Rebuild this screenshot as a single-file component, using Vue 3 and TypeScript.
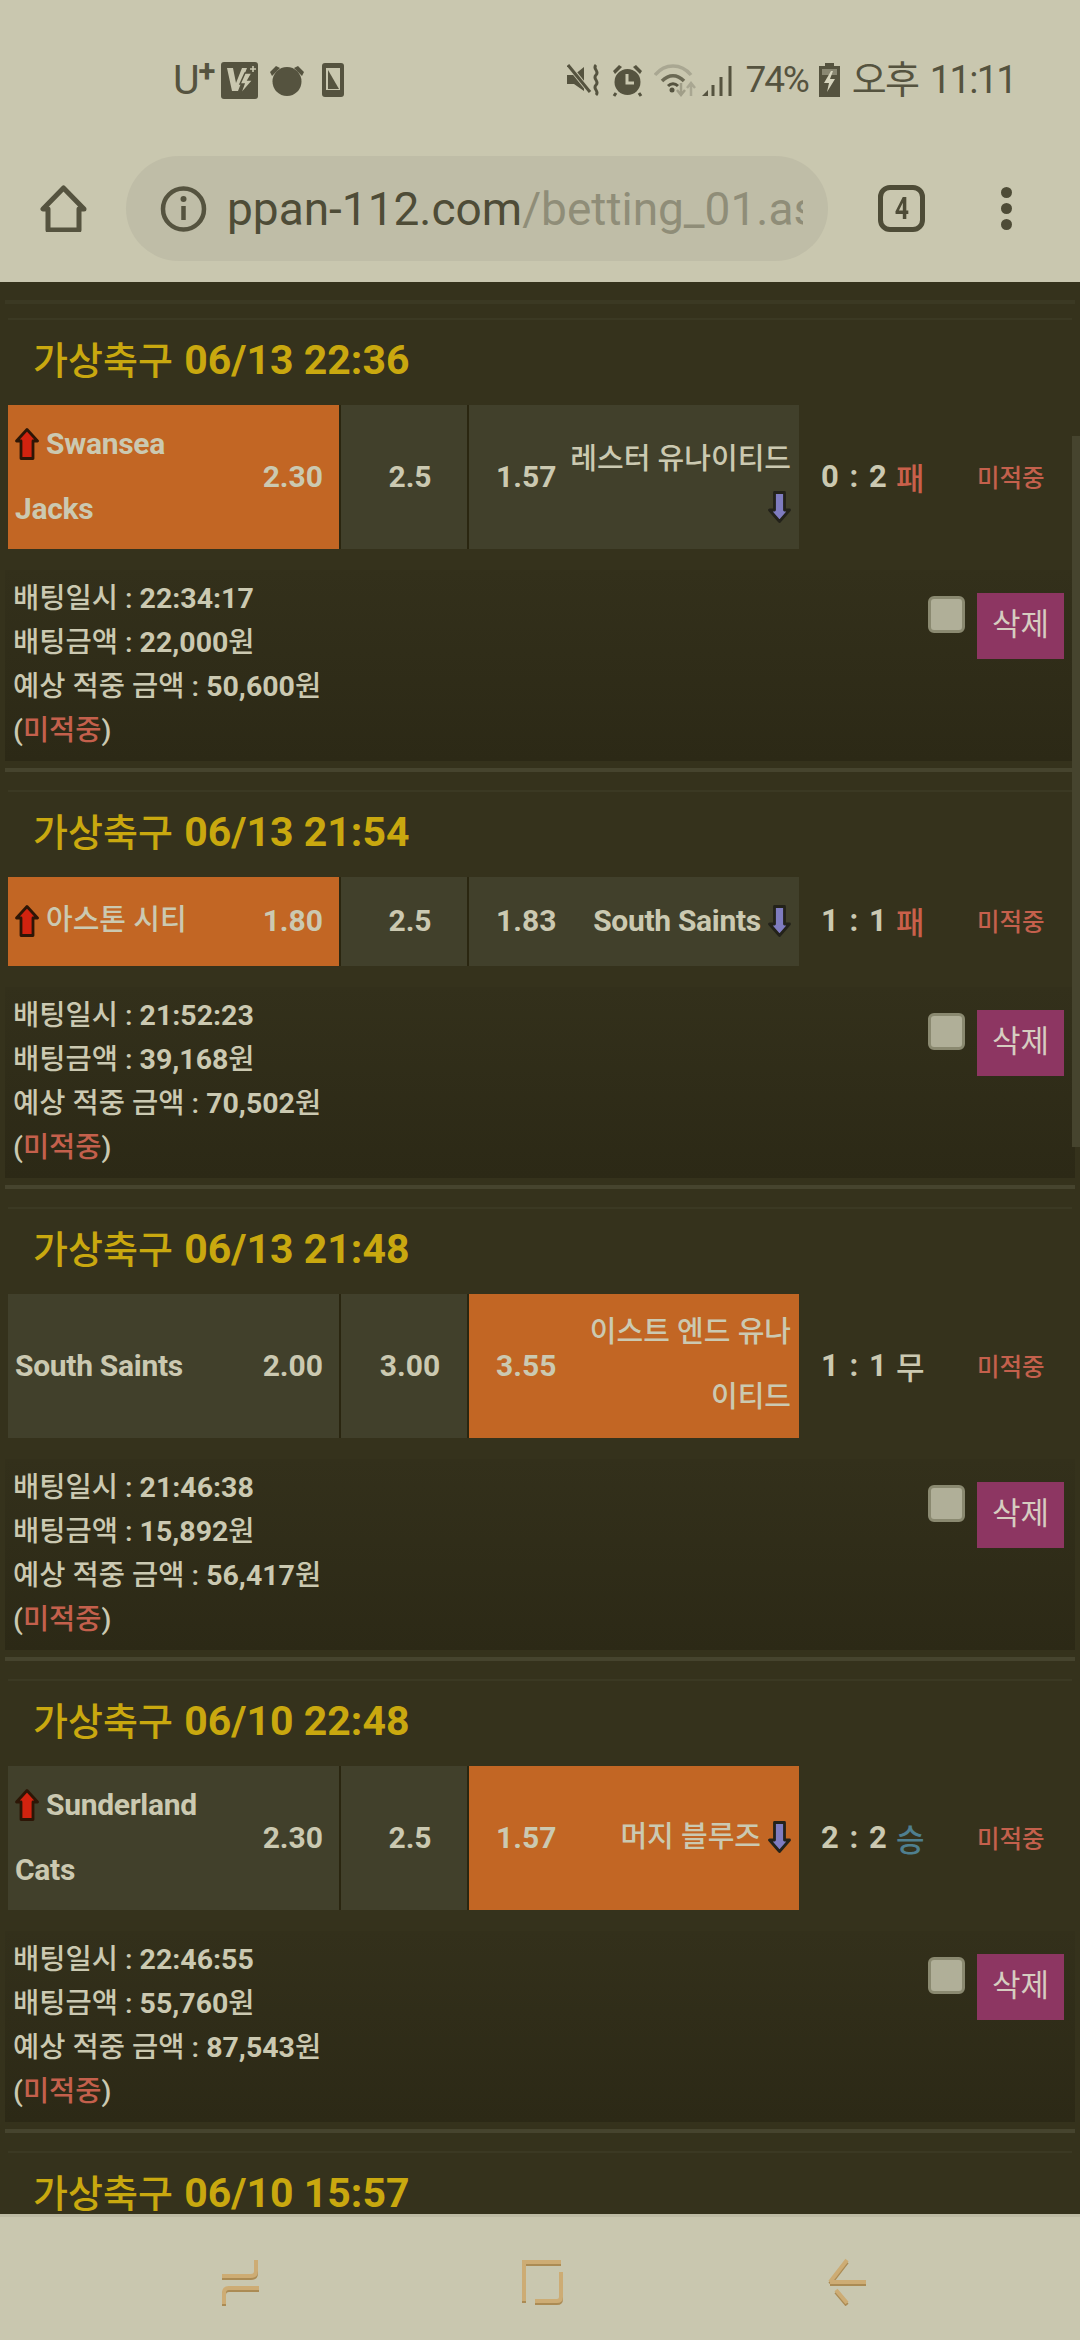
<script setup lang="ts">
// Betting history list under a mobile browser chrome. Everything is static data.
interface Line {
  text?: string;
  arrow?: "up" | "down";
}
interface Slip {
  date: string;
  home: Line[];
  homeOdds: string;
  mid: string;
  awayOdds: string;
  away: Line[];
  tight?: boolean;
  score: string;
  result: string;
  resultClass: string;
  picked: "home" | "away";
  time: string;
  stake: string;
  payout: string;
}

const slips: Slip[] = [
  {
    date: "06/13 22:36",
    home: [{ text: "Swansea", arrow: "up" }, { text: "Jacks" }],
    homeOdds: "2.30",
    mid: "2.5",
    awayOdds: "1.57",
    away: [{ text: "레스터 유나이티드" }, { arrow: "down" }],
    tight: true,
    score: "0 : 2",
    result: "패",
    resultClass: "lose",
    picked: "home",
    time: "22:34:17",
    stake: "22,000",
    payout: "50,600",
  },
  {
    date: "06/13 21:54",
    home: [{ text: "아스톤 시티", arrow: "up" }],
    homeOdds: "1.80",
    mid: "2.5",
    awayOdds: "1.83",
    away: [{ text: "South Saints", arrow: "down" }],
    score: "1 : 1",
    result: "패",
    resultClass: "lose",
    picked: "home",
    time: "21:52:23",
    stake: "39,168",
    payout: "70,502",
  },
  {
    date: "06/13 21:48",
    home: [{ text: "South Saints" }],
    homeOdds: "2.00",
    mid: "3.00",
    awayOdds: "3.55",
    away: [{ text: "이스트 엔드 유나" }, { text: "이티드" }],
    score: "1 : 1",
    result: "무",
    resultClass: "draw",
    picked: "away",
    time: "21:46:38",
    stake: "15,892",
    payout: "56,417",
  },
  {
    date: "06/10 22:48",
    home: [{ text: "Sunderland", arrow: "up" }, { text: "Cats" }],
    homeOdds: "2.30",
    mid: "2.5",
    awayOdds: "1.57",
    away: [{ text: "머지 블루즈", arrow: "down" }],
    score: "2 : 2",
    result: "승",
    resultClass: "win",
    picked: "away",
    time: "22:46:55",
    stake: "55,760",
    payout: "87,543",
  },
];

const isHangul = (s?: string) => !!s && /[가-힣]/.test(s);
</script>

<template>
  <div class="phone">
    <header class="chrome">
      <div class="status">
        <div class="status-left">
          <span class="carrier">U<sup>+</sup></span>
          <svg width="37" height="37" viewBox="0 0 37 37">
            <rect width="37" height="37" rx="3" fill="#55533f" />
            <path d="M6 6h6l3 15 6-15h5l-9 23h-6z" fill="#c9c7af" />
            <path d="M24 11l7 0-4 7 5 0-13 15 4-11-4 0z" fill="#c9c7af" stroke="#55533f" stroke-width="1.5" />
            <path d="M29 7h6M32 4v6" stroke="#c9c7af" stroke-width="1.6" />
          </svg>
          <svg class="bell" width="36" height="32" viewBox="0 0 36 32">
            <circle cx="18" cy="17.5" r="14.5" fill="#55533f" />
            <path d="M1 8l6-6 4 2-8 8zM35 8l-6-6-4 2 8 8z" fill="#55533f" />
          </svg>
          <svg class="handset" width="22" height="34" viewBox="0 0 22 34">
            <rect width="22" height="34" rx="3" fill="#55533f" />
            <path d="M4 5h14v22H4z" fill="#c9c7af" />
            <path d="M6 7l11 19H6z" fill="#55533f" />
          </svg>
        </div>
        <div class="status-right">
          <svg width="34" height="32" viewBox="0 0 34 32">
            <path d="M0 11h7l10-8v24l-10-7H0z" fill="#55533f" />
            <path d="M2 2l21 26" stroke="#c9c7af" stroke-width="5" />
            <path d="M1 1l22 27" stroke="#55533f" stroke-width="3" />
            <path d="M29 1c-4 4 4 6 0 10s4 6 0 10 4 6 0 10" stroke="#55533f" stroke-width="3" fill="none" />
          </svg>
          <svg class="gap-s" width="31" height="33" viewBox="0 0 31 33">
            <circle cx="15.5" cy="18" r="13" fill="#55533f" />
            <path d="M1 7l6-6 3 2-7 7zM30 7l-6-6-3 2 7 7z" fill="#55533f" />
            <path d="M4 29l-2 3M27 29l2 3" stroke="#55533f" stroke-width="3" />
            <path d="M15 10v9h7" stroke="#c9c7af" stroke-width="3" fill="none" />
          </svg>
          <svg class="gap-s" width="42" height="33" viewBox="0 0 42 33">
            <path d="M1 11c10-12 26-12 36 0" stroke="#a9a792" stroke-width="3.5" fill="none" />
            <path d="M8 17c7-7 15-7 22 0" stroke="#6b6954" stroke-width="3.5" fill="none" />
            <path d="M14 22c3-3 7-3 10 0" stroke="#55533f" stroke-width="3" fill="none" />
            <circle cx="18" cy="26" r="2.5" fill="#55533f" />
            <path d="M27 19v11m-4-4l4 5 4-5" stroke="#a09e88" stroke-width="2.5" fill="none" />
            <path d="M37 32V20m-4 4l4-5 4 5" stroke="#a9a792" stroke-width="2.5" fill="none" />
          </svg>
          <svg class="gap-xs" width="31" height="32" viewBox="0 0 31 32">
            <path d="M0 32l6-6v6z" fill="#55533f" />
            <path d="M11 32V21M19 32V13M28 32V2" stroke="#55533f" stroke-width="3" />
          </svg>
          <span class="pct">74%</span>
          <svg class="gap-s" width="21" height="34" viewBox="0 0 21 34">
            <path d="M6 0h9v3h6v31H0V3h6z" fill="#55533f" />
            <path d="M3 6h15v6H3z" fill="#8a8873" />
            <path d="M12 8l-7 12h5l-2 9 8-13h-5l3-8z" fill="#d6d4bd" />
          </svg>
          <span class="clock">오후 11:11</span>
        </div>
      </div>
      <div class="toolbar">
        <svg class="home-btn" width="47" height="47" viewBox="0 0 47 47">
          <path d="M23.5 3L3 24h5v21h31V24h5z" fill="none" stroke="#55533f" stroke-width="5" stroke-linejoin="round" />
        </svg>
        <div class="pill">
          <svg width="47" height="46" viewBox="0 0 47 46">
            <circle cx="23.5" cy="23" r="20.5" fill="none" stroke="#55533f" stroke-width="4.5" />
            <path d="M23.5 20v14" stroke="#55533f" stroke-width="4.5" />
            <circle cx="23.5" cy="13" r="3" fill="#55533f" />
          </svg>
          <div class="url"><span class="host">ppan-112.com</span><span class="path">/betting_01.asp</span></div>
        </div>
        <div class="tabs"><span>4</span></div>
        <div class="dots"><i /><i /><i /></div>
      </div>
    </header>

    <main class="list">
      <section v-for="s in slips" :key="s.date" class="slip">
        <div class="rule" />
        <div class="head"><h2>가상축구 <b>{{ s.date }}</b></h2></div>
        <div class="row">
          <div class="cell side" :class="{ picked: s.picked === 'home' }">
            <div class="names">
              <div v-for="(l, i) in s.home" :key="i" class="line" :class="{ ko: isHangul(l.text) }">
                <svg v-if="l.arrow" class="arrow-up" width="24" height="32" viewBox="0 0 24 32">
                  <path d="M12 1.5L22.5 13H18v17.5H6V13H1.5z" fill="#d2230f" stroke="#2d1606" stroke-width="2.8" stroke-linejoin="round" />
                </svg>
                {{ l.text }}
              </div>
            </div>
            <span class="odds">{{ s.homeOdds }}</span>
          </div>
          <div class="cell mid">{{ s.mid }}</div>
          <div class="cell side away" :class="{ picked: s.picked === 'away' }">
            <span class="odds">{{ s.awayOdds }}</span>
            <div class="names" :class="{ tight: s.tight }">
              <div v-for="(l, i) in s.away" :key="i" class="line" :class="{ ko: isHangul(l.text) }">
                {{ l.text }}
                <svg v-if="l.arrow" class="arrow-down" width="23" height="32" viewBox="0 0 23 32">
                  <path d="M6.5 1.5h10V19h5L11.5 30.5 1.5 19h5z" fill="#7f7cc0" stroke="#23221a" stroke-width="2.8" stroke-linejoin="round" />
                </svg>
              </div>
            </div>
          </div>
          <div class="score">
            <span class="nums">{{ s.score }}</span>
            <span class="result" :class="s.resultClass">{{ s.result }}</span>
          </div>
          <div class="state">미적중</div>
        </div>
        <div class="panel">
          <div class="info">
            <p>배팅일시 : <b>{{ s.time }}</b></p>
            <p>배팅금액 : <b>{{ s.stake }}</b>원</p>
            <p>예상 적중 금액 : <b>{{ s.payout }}</b>원</p>
            <p>(<em>미적중</em>)</p>
          </div>
          <div class="actions">
            <span class="check" />
            <span class="del">삭제</span>
          </div>
        </div>
      </section>
      <section class="slip">
        <div class="rule" />
        <div class="head"><h2>가상축구 <b>06/10 15:57</b></h2></div>
      </section>
      <div class="scrollbar" />
    </main>

    <nav class="nav">
      <svg width="42" height="48" viewBox="0 0 42 48">
        <path d="M37 2v11q0 5-5 5H3M40 30H10q-5 0-5 5v11" fill="none" stroke="#cdac74" stroke-width="4" />
      </svg>
      <svg width="44" height="46" viewBox="0 0 44 46">
        <path d="M41 4H4v39M41 14v25q0 4-4 4H15" fill="none" stroke="#cdac74" stroke-width="4" />
      </svg>
      <svg width="40" height="46" viewBox="0 0 40 46">
        <path d="M20 2L3 24M3 24h36M9 32l11 13" fill="none" stroke="#cdac74" stroke-width="4" />
      </svg>
    </nav>
  </div>
</template>

<style scoped>
.phone {
  width: 1080px;
  height: 2340px;
  display: flex;
  flex-direction: column;
  overflow: hidden;
  background: #35321c;
  color: #cbc9b1;
  font-family: Roboto, "Noto Sans CJK KR", sans-serif;
}
.chrome {
  height: 282px;
  flex: none;
  background: #c9c7af;
  color: #4e4c37;
}
.status {
  height: 128px;
  padding: 32px 64px 0 173px;
  box-sizing: border-box;
  display: flex;
  justify-content: space-between;
  align-items: center;
}
.status-left,
.status-right {
  display: flex;
  align-items: center;
}
.carrier {
  font-size: 41px;
  line-height: 40px;
  color: #55533f;
  width: 48px;
}
.carrier sup {
  font-size: 31px;
  font-weight: 700;
  line-height: 0;
  vertical-align: 12px;
  margin-left: -1px;
}
.bell {
  margin-left: 11px;
}
.handset {
  margin-left: 17px;
}
.gap-s {
  margin-left: 11px;
}
.gap-xs {
  margin-left: 6px;
}
.pct {
  margin-left: 13px;
  font-size: 37px;
  line-height: 40px;
  letter-spacing: -2.2px;
  color: #55533f;
}
.clock {
  margin-left: 12px;
  font-size: 38px;
  line-height: 40px;
  letter-spacing: -1.7px;
  word-spacing: 4px;
  color: #55533f;
}
.toolbar {
  height: 105px;
  margin-top: 28px;
  padding-left: 40px;
  display: flex;
  align-items: center;
}
.home-btn {
  flex: none;
}
.pill {
  width: 702px;
  height: 105px;
  margin-left: 39px;
  padding: 0 25px 0 34px;
  box-sizing: border-box;
  border-radius: 53px;
  background: #bfbda7;
  display: flex;
  align-items: center;
  gap: 20px;
  flex: none;
}
.url {
  flex: 1;
  min-width: 0;
  overflow: hidden;
  white-space: nowrap;
  font-size: 46px;
  line-height: 60px;
}
.host {
  color: #4e4c37;
}
.path {
  color: #8f8d78;
}
.tabs {
  width: 47px;
  height: 47px;
  margin-left: 50px;
  box-sizing: border-box;
  border: 5px solid #4e4c37;
  border-radius: 12px;
  display: flex;
  align-items: center;
  justify-content: center;
  flex: none;
}
.tabs span {
  font-size: 31px;
  font-weight: 700;
  line-height: 37px;
  transform: scaleX(0.8);
}
.dots {
  margin-left: 76px;
  display: flex;
  flex-direction: column;
  gap: 5px;
}
.dots i {
  width: 11px;
  height: 11px;
  border-radius: 50%;
  background: #4e4c37;
}

.list {
  position: relative;
  flex: 1;
  min-height: 0;
  overflow: hidden;
  padding-top: 14px;
}
.slip {
  padding-bottom: 7px;
}
.rule {
  height: 4px;
  margin: 0 5px;
  background: #46442e;
}
.head {
  height: 87px;
  margin: 18px 8px 0;
  box-sizing: border-box;
  border-top: 2px solid #3b3923;
  padding: 15px 0 0 25px;
}
/* the first divider sits half scrolled away, so it reads fainter */
.slip:first-child .rule {
  margin-top: 4px;
  background: #3b3923;
}
.slip:first-child .head {
  margin-top: 14px;
}
.head h2 {
  margin: 0;
  font-size: 38px;
  font-weight: 500;
  line-height: 50px;
  color: #c9a80f;
  white-space: nowrap;
}
.head b {
  font-size: 41px;
  font-weight: 700;
  margin-left: 2px;
}
.row {
  display: flex;
  margin: 0 0 0 8px;
  min-height: 89px;
  align-items: stretch;
}
.cell {
  background: #41402b;
  font-size: 30px;
  font-weight: 700;
  margin-right: 2px;
  box-shadow: 2px 0 0 #2a2610;
}
.cell.picked {
  background: #c26624;
}
.side {
  width: 331px;
  padding: 0 16px 2px 7px;
  box-sizing: border-box;
  display: flex;
  align-items: center;
  justify-content: space-between;
}
.side.away {
  width: 330px;
  margin-right: 0;
  padding: 0 8px 2px 27px;
  box-shadow: none;
}
.mid {
  width: 126px;
  padding: 0 0 2px 12px;
  box-sizing: border-box;
  display: flex;
  align-items: center;
  justify-content: center;
}
.names {
  padding: 6px 0;
}
.line {
  line-height: 65px;
  white-space: nowrap;
  display: flex;
  align-items: center;
  gap: 7px;
  letter-spacing: -0.3px;
}
.away .names {
  text-align: right;
}
.away .line {
  justify-content: flex-end;
}
.line.ko {
  font-weight: 500;
  font-size: 29px;
  letter-spacing: 0;
}
.tight .line:first-child {
  line-height: 62px;
}
.tight .line:last-child {
  line-height: 34px;
  height: 34px;
}
.score {
  width: 178px;
  padding: 0 0 2px 22px;
  box-sizing: border-box;
  display: flex;
  align-items: center;
  flex: none;
}
.nums {
  width: 75px;
  font-size: 31px;
  font-weight: 700;
  word-spacing: 3px;
}
.result {
  font-size: 31px;
  font-weight: 500;
}
.lose {
  color: #c9604a;
}
.draw {
  color: #cbc9b1;
}
.win {
  color: #4f7f8f;
}
.state {
  display: flex;
  align-items: center;
  padding-bottom: 2px;
  font-size: 24.5px;
  font-weight: 500;
  color: #c4604c;
}
.panel {
  height: 191px;
  margin: 21px 5px 0;
  padding: 7px 11px 0 8px;
  box-sizing: border-box;
  background: linear-gradient(#33301b, #2c2916);
  display: flex;
  justify-content: space-between;
}
.info p {
  margin: 0;
  font-size: 28.5px;
  font-weight: 500;
  line-height: 44px;
}
.info b {
  font-weight: 700;
}
.info em {
  font-style: normal;
  color: #c4604c;
}
.actions {
  display: flex;
  gap: 12px;
  padding-top: 16px;
  align-items: flex-start;
}
.check {
  width: 37px;
  height: 37px;
  margin-top: 3px;
  box-sizing: border-box;
  border: 3px solid #8a8970;
  border-radius: 6px;
  background: #b0af98;
}
.del {
  width: 87px;
  height: 66px;
  background: #8d3662;
  color: #d6cdc0;
  font-size: 31px;
  line-height: 64px;
  text-align: center;
}
.scrollbar {
  position: absolute;
  top: 154px;
  right: 0;
  width: 8px;
  height: 711px;
  background: #46442e;
}
.nav {
  height: 126px;
  flex: none;
  box-sizing: border-box;
  border-top: 3px solid #bdbba4;
  background: #c9c7af;
  display: grid;
  grid-template-columns: 219px 42px 259px 44px 263px 40px;
  align-items: start;
  padding-top: 41px;
}
.nav svg {
  filter: drop-shadow(0 2px 0 #ab8b54);
}
.nav svg:nth-child(1) {
  grid-column: 2;
}
.nav svg:nth-child(2) {
  grid-column: 4;
}
.nav svg:nth-child(3) {
  grid-column: 6;
}
</style>

<style>
html,
body {
  margin: 0;
  background: #35321c;
}
</style>
